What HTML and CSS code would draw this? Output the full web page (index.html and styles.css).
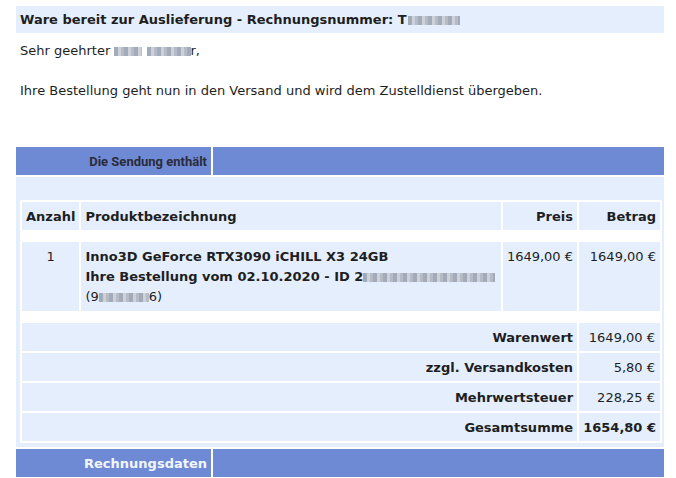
FILE: index.html
```html
<!DOCTYPE html>
<html lang="de">
<head>
  <meta charset="UTF-8">
  <title>Ware bereit zur Auslieferung</title>
  <link rel="stylesheet" href="styles.css">
</head>
<body>
  <div class="mail">
    <div class="titel">Ware bereit zur Auslieferung - Rechnungsnummer: T<span class="blur blur-nr"></span></div>

    <p class="anrede">Sehr geehrter <span class="blur blur-vorname"></span> <span class="blur blur-name"></span>r,</p>
    <p class="text">Ihre Bestellung geht nun in den Versand und wird dem Zustelldienst übergeben.</p>

    <table class="rahmen">
      <tr>
        <td class="kopf kopf-dunkel">Die Sendung enthält</td>
        <td class="kopf"></td>
      </tr>
      <tr>
        <td class="inhalt" colspan="2">
          <table class="posten">
            <tr class="zeile-kopf">
              <th class="col-anzahl">Anzahl</th>
              <th class="col-produkt links">Produktbezeichnung</th>
              <th class="col-preis">Preis</th>
              <th class="col-betrag">Betrag</th>
            </tr>
            <tr class="leer"><td colspan="4"></td></tr>
            <tr class="artikel">
              <td class="mitte">1</td>
              <td class="links">
                <b>Inno3D GeForce RTX3090 iCHILL X3 24GB</b><br>
                <b>Ihre Bestellung vom 02.10.2020 - ID 2<span class="blur blur-id"></span></b><br>
                (9<span class="blur blur-art"></span>6)
              </td>
              <td>1649,00 €</td>
              <td>1649,00 €</td>
            </tr>
            <tr class="leer"><td colspan="4"></td></tr>
            <tr class="summe">
              <th colspan="3">Warenwert</th>
              <td>1649,00 €</td>
            </tr>
            <tr class="summe">
              <th colspan="3">zzgl. Versandkosten</th>
              <td>5,80 €</td>
            </tr>
            <tr class="summe">
              <th colspan="3">Mehrwertsteuer</th>
              <td>228,25 €</td>
            </tr>
            <tr class="summe">
              <th colspan="3">Gesamtsumme</th>
              <th>1654,80 €</th>
            </tr>
          </table>
        </td>
      </tr>
      <tr>
        <td class="kopf kopf-hell">Rechnungsdaten</td>
        <td class="kopf"></td>
      </tr>
    </table>
  </div>
</body>
</html>
```

FILE: styles.css
```css
:root {
  --hellblau: #e4eefd;
  --blau: #6f8ad4;
  --text: #1e1e1e;
}

body {
  margin: 0;
  font-family: "DejaVu Sans", Verdana, sans-serif;
  font-size: 13px;
  color: var(--text);
  background: #ffffff;
}

.mail {
  width: 648px;
  padding: 6px 12px 0 16px;
}

.titel {
  height: 27px;
  line-height: 28px;
  padding-left: 4px;
  background-color: var(--hellblau);
  font-weight: bold;
}

.anrede {
  margin: 10px 0 0 4px;
  line-height: 16px;
}

.text {
  margin: 24px 0 0 4px;
  line-height: 16px;
}

/* Platzhalter fuer unkenntlich gemachte Daten */
.blur {
  display: inline-block;
  height: 9px;
  vertical-align: -1px;
  background: repeating-linear-gradient(90deg, #a3aab8 0 4px, #ccd1da 4px 7px, #b6bcc7 7px 10px);
}

.blur-nr { width: 52px; margin-left: 1px; }
.blur-vorname { width: 28px; }
.blur-name { width: 44px; }
.blur-id { width: 132px; }
.blur-art { width: 50px; }

.rahmen {
  margin: 46px 0 0 -2px;
  width: 652px;
  border-collapse: separate;
  border-spacing: 2px;
}

.kopf {
  height: 28px;
  padding: 0;
  background-color: var(--blau);
}

.kopf-dunkel,
.kopf-hell {
  width: 191px;
  padding-right: 4px;
  text-align: right;
  font-weight: bold;
}

.kopf-dunkel {
  font-family: Roboto, Tahoma, sans-serif;
  font-size: 13px;
  color: #2a2a3a;
}

.kopf-hell {
  font-size: 13px;
  color: #f2f6ff;
}

.inhalt {
  padding: 23px 2px 4px 4px;
  background-color: var(--hellblau);
}

.posten {
  width: 642px;
  background: #ffffff;
  border-collapse: separate;
  border-spacing: 2px;
}

.posten th,
.posten td {
  background-color: var(--hellblau);
  padding: 0 4px;
  text-align: right;
  white-space: nowrap;
}

.posten th { font-weight: bold; }

.col-anzahl { width: 49px; }
.col-produkt { width: 412px; }
.col-preis { width: 65px; }
.col-betrag { width: 73px; }

.posten .links { text-align: left; }
.posten .mitte { text-align: center; }

.zeile-kopf th { height: 28px; }

.posten .leer td {
  height: 8px;
  padding: 0;
  background: #ffffff;
}

.artikel td {
  height: 69px;
  vertical-align: top;
  padding-top: 5px;
  line-height: 20px;
  box-sizing: border-box;
}

.summe th,
.summe td { height: 28px; }

.summe td { padding-right: 5px; }
```
